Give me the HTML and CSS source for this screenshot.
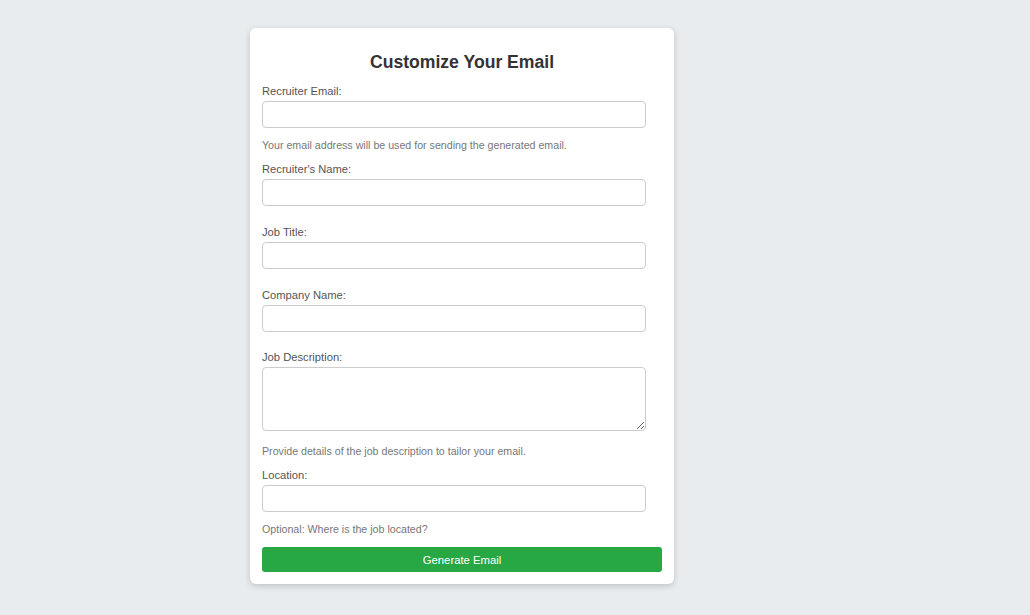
FILE: index.html
```html
<!DOCTYPE html>
<html lang="en">
<head>
<meta charset="utf-8">
<title>Customize Your Email</title>
<link rel="stylesheet" href="styles.css">
</head>
<body>
<div class="page">
  <form class="card">
    <h2 class="title">Customize Your Email</h2>
    <div class="group has-help">
      <label class="label" for="email">Recruiter Email:</label>
      <input class="field" id="email" type="email">
      <small class="help">Your email address will be used for sending the generated email.</small>
    </div>
    <div class="group">
      <label class="label" for="name">Recruiter's Name:</label>
      <input class="field" id="name" type="text">
    </div>
    <div class="group">
      <label class="label" for="job">Job Title:</label>
      <input class="field" id="job" type="text">
    </div>
    <div class="group">
      <label class="label" for="company">Company Name:</label>
      <input class="field" id="company" type="text">
    </div>
    <div class="group has-help">
      <label class="label" for="desc">Job Description:</label>
      <textarea class="field area" id="desc"></textarea>
      <small class="help help-area">Provide details of the job description to tailor your email.</small>
    </div>
    <div class="group has-help">
      <label class="label" for="loc">Location:</label>
      <input class="field" id="loc" type="text">
      <small class="help">Optional: Where is the job located?</small>
    </div>
    <button class="submit" type="button">Generate Email</button>
  </form>
</div>
</body>
</html>
```

FILE: styles.css
```css
html, body {
  margin: 0;
  padding: 0;
}
body {
  background: #e9ecef;
  font-family: "Liberation Sans", Arial, sans-serif;
  color: #444;
  min-height: 615px;
}
.page {
  padding: 28px 0 0 250px;
}
.card {
  width: 400px;
  padding: 12px;
  background: #fff;
  border-radius: 6px;
  box-shadow: 0 2px 6px rgba(0, 0, 0, 0.18);
}
.title {
  margin: 11px 0 12px;
  text-align: center;
  font-size: 17.6px;
  line-height: 22px;
  color: #333;
}
.group {
  margin-bottom: 19.8px;
}
.group.has-help {
  margin-bottom: 11px;
}
.label {
  display: block;
  font-size: 11.2px;
  line-height: 13px;
  margin-bottom: 3px;
  color: #555;
}
.field {
  display: block;
  box-sizing: border-box;
  width: 384px;
  height: 27px;
  margin: 0;
  padding: 4px 6px;
  border: 1px solid #ccc;
  border-radius: 4px;
  font-family: inherit;
  font-size: 11px;
}
.area {
  height: 64px;
}
.help {
  display: block;
  margin-top: 11px;
  font-size: 10.65px;
  line-height: 13px;
  color: #777;
}
.help-area {
  margin-top: 13.5px;
}
.submit {
  display: block;
  width: 400px;
  height: 25px;
  margin-top: 11.5px;
  border: none;
  border-radius: 3px;
  background: #28a745;
  color: #fff;
  font-family: inherit;
  font-size: 11.3px;
}
```
